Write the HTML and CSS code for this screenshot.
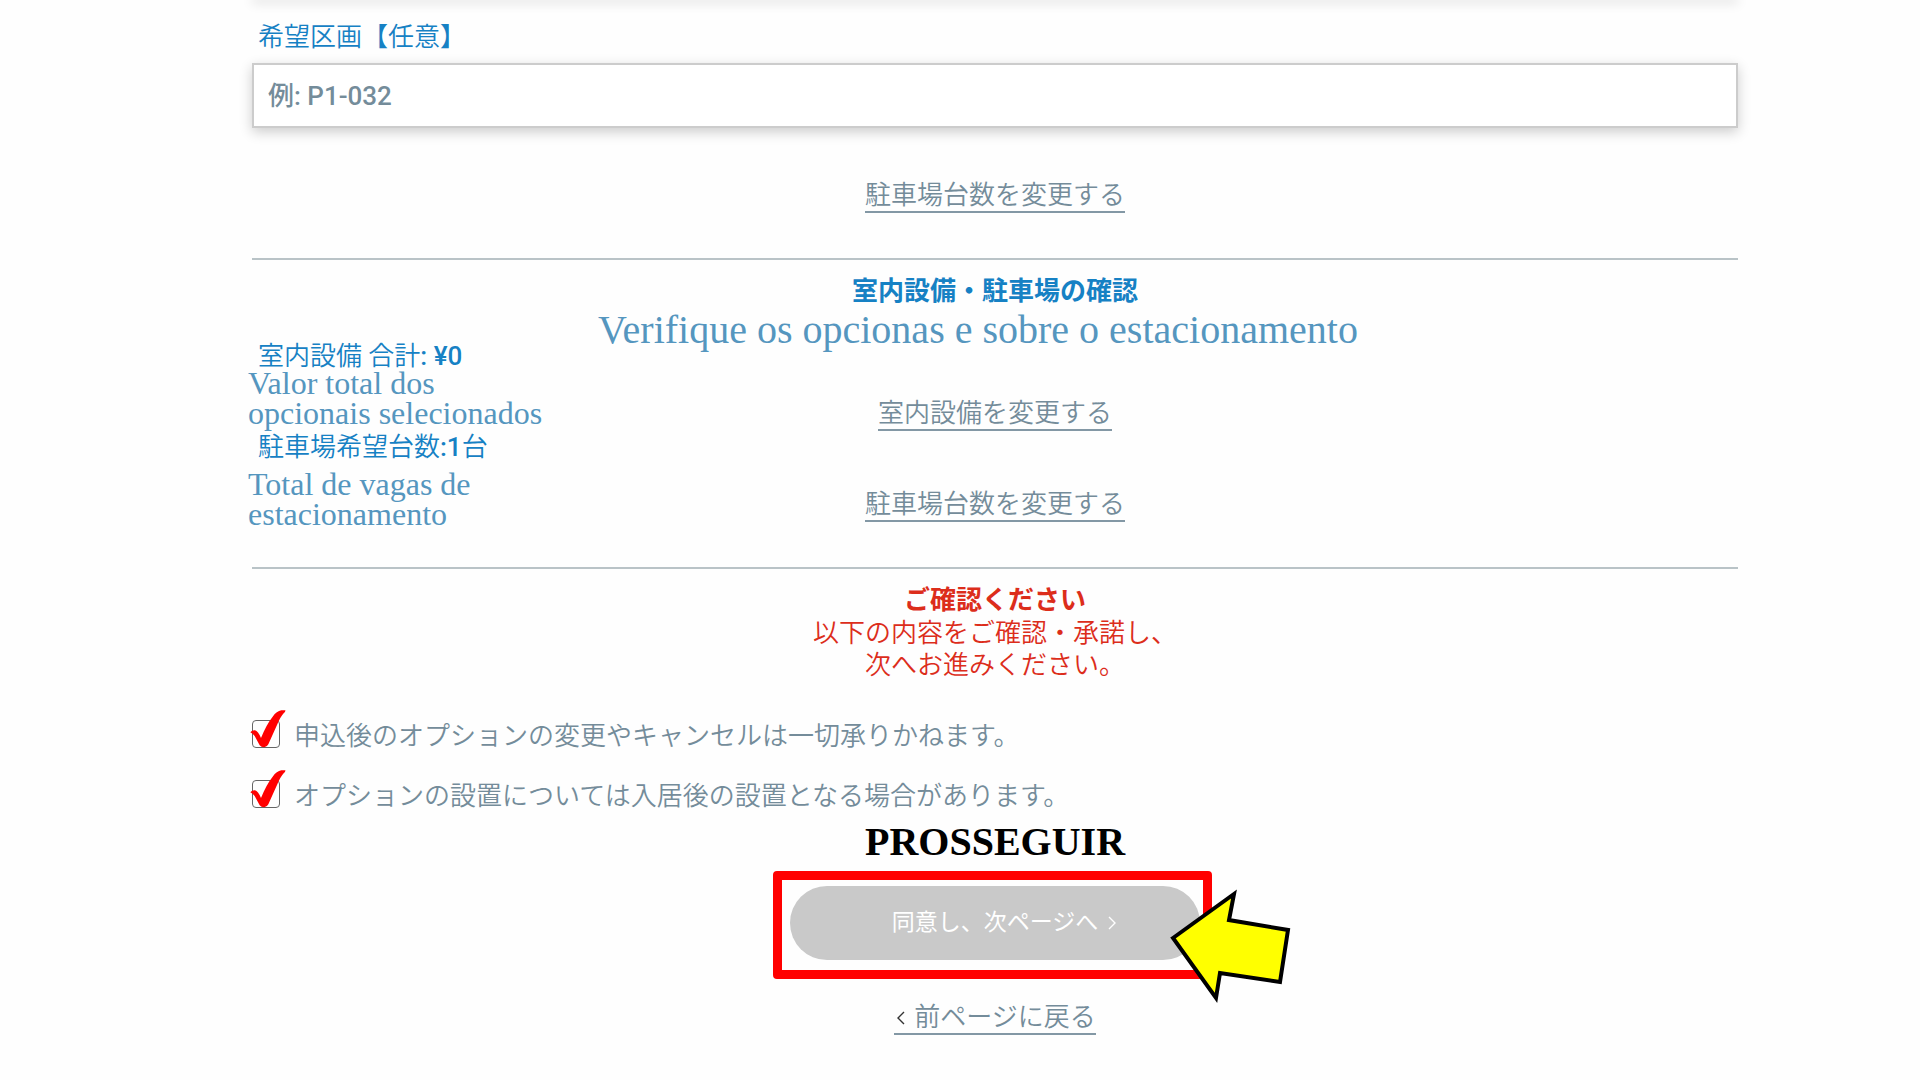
FILE: index.html
```html
<!DOCTYPE html>
<html lang="ja">
<head>
<meta charset="utf-8">
<meta name="viewport" content="width=device-width, initial-scale=1">
<title>室内設備・駐車場の確認</title>
<link rel="stylesheet" href="styles.css">
</head>
<body>
<main class="page">
  <div class="field-end"></div>
  <form class="form">
    <label class="field-label" for="lot">希望区画【任意】</label>
    <input class="field-input" id="lot" type="text" placeholder="例: P1-032">
    <a class="link parking-link" href="#">駐車場台数を変更する</a>

    <section class="section">
      <h2 class="title">室内設備・駐車場の確認</h2>
      <p class="subtitle" lang="pt">Verifique os opcionas e sobre o estacionamento</p>
      <div class="summary">
        <div class="row">
          <div>
            <p class="total">室内設備 合計<span class="value">: ¥0</span></p>
            <p class="note" lang="pt">Valor total dos<br>opcionais selecionados</p>
          </div>
          <a class="link row-link" href="#">室内設備を変更する</a>
        </div>
        <div class="row row-parking">
          <div>
            <p class="total">駐車場希望台数<span class="value">:1</span>台</p>
            <p class="note" lang="pt">Total de vagas de<br>estacionamento</p>
          </div>
          <a class="link row-link" href="#">駐車場台数を変更する</a>
        </div>
      </div>
    </section>

    <section class="section">
      <h2 class="title warning-title">ご確認ください</h2>
      <p class="warning">以下の内容をご確認・承諾し、<br>次へお進みください。</p>
      <div class="checks">
        <label class="check">
          <input class="box" type="checkbox">
          <svg class="tick" viewBox="0 0 108 114" aria-hidden="true"><path d="M1 67 Q6 60 15 61 Q24 63 33 84 Q50 42 68 20 Q80 3 94 1 L106 1 Q107 4 101 10 Q91 21 82 43 L55 103 Q51 111 43 112 Q33 112 29 106 L14 78 Q8 70 1 67Z"/></svg>
          <span class="check-text">申込後のオプションの変更やキャンセルは一切承りかねます。</span>
        </label>
        <label class="check">
          <input class="box" type="checkbox">
          <svg class="tick" viewBox="0 0 108 114" aria-hidden="true"><path d="M1 67 Q6 60 15 61 Q24 63 33 84 Q50 42 68 20 Q80 3 94 1 L106 1 Q107 4 101 10 Q91 21 82 43 L55 103 Q51 111 43 112 Q33 112 29 106 L14 78 Q8 70 1 67Z"/></svg>
          <span class="check-text">オプションの設置については入居後の設置となる場合があります。</span>
        </label>
      </div>
      <p class="proceed" lang="pt">PROSSEGUIR</p>
      <div class="submit">
        <button class="next" type="button">
          <span class="next-text">同意し、次ページへ</span>
          <svg class="next-icon" viewBox="0 0 8 14" aria-hidden="true"><path d="M1 1 L7 7 L1 13"/></svg>
        </button>
        <div class="frame"></div>
        <svg class="arrow" viewBox="0 0 130 120" aria-hidden="true"><path d="M8 53 L69 9 L64 35 L123 45 L115 97 L55 88 L51 113Z"/></svg>
      </div>
      <a class="link back" href="#"><svg class="back-icon" viewBox="0 0 8 14" aria-hidden="true"><path d="M7 1 L1 7 L7 13"/></svg>前ページに戻る</a>
    </section>
  </form>
</main>
</body>
</html>
```
FILE: styles.css
```css
* { box-sizing: border-box; }

body {
  margin: 0;
  background: #fefefe;
  color: #748c9a;
  font: 350 26px/32px Roboto, "Noto Sans CJK JP", sans-serif;
}

h2, p { margin: 0; font-size: 26px; }

.page {
  display: flow-root;
  padding: 0 182px 44px 252px;
}

/* lower edge of the preceding field */
.field-end {
  height: 4px;
  margin-top: -6px;
  box-shadow: 0 4px 12px rgba(0, 0, 0, .2);
}

.form {
  display: flex;
  flex-direction: column;
  padding-top: 23px;
}

.field-label {
  padding-left: 6px;
  color: #1681c4;
}

.field-input {
  width: 100%;
  height: 65px;
  margin-top: 10px;
  padding: 0 14px;
  border: 2px solid #ccc;
  background: #fff;
  box-shadow: 0 4px 12px rgba(0, 0, 0, .2);
  color: inherit;
  font: inherit;
  font-weight: 500;
}
.field-input::placeholder { color: #748c9a; opacity: 1; }

.link {
  align-self: center;
  padding-top: 2px;
  border-bottom: 2px solid #8398a5;
  color: #748c9a;
  line-height: 31px;
  text-decoration: none;
}
.parking-link { margin: 50px 0 45px; }

.section {
  display: flex;
  flex-direction: column;
  border-top: 2px solid #b9c3c7;
  padding-top: 15px;
}

.title {
  color: #1681c4;
  font-weight: 700;
  line-height: 33px;
  text-align: center;
}

.subtitle {
  margin-top: 6px;
  padding-right: 34px;
  color: #5596bf;
  font: 40px/32px "Liberation Serif", serif;
  text-align: center;
}

.summary { padding-bottom: 38px; }
.row {
  display: grid;
  grid-template-columns: 1fr auto 1fr;
  align-items: start;
}
.row + .row { margin-top: 6px; }
.row-link { align-self: start; margin-top: 50px; }

.total {
  padding-left: 6px;
  color: #1681c4;
  line-height: 20px;
}
.value { font-weight: 500; }
.note {
  margin: 2px 0 0 -4px;
  color: #5596bf;
  font: 32px/30px "Liberation Serif", serif;
}
.row-parking .note { margin-top: 12px; }

.warning-title,
.warning { color: #dc2d1b; }
.warning { text-align: center; }

.checks {
  display: grid;
  gap: 32px;
  justify-items: start;
  margin-top: 39px;
}
.check {
  position: relative;
  display: flex;
  align-items: center;
  gap: 14px;
  line-height: 24px;
}
.check-text { padding-top: 4px; }
.box {
  appearance: none;
  width: 28px;
  height: 28px;
  margin: 0;
  border: 1px solid #666;
  border-radius: 4px;
}
.tick {
  position: absolute;
  left: -2px;
  bottom: 0;
  width: 36px;
  height: 38px;
  fill: #f00;
}

.proceed {
  margin-top: 14px;
  color: #000;
  font: 700 40px/40px "Liberation Serif", serif;
  text-align: center;
}

.submit {
  position: relative;
  align-self: center;
  width: 410px;
  margin: 24px 0 40px;
}
.next {
  display: grid;
  grid-template-columns: 1fr auto 1fr;
  gap: 10px;
  align-items: center;
  width: 100%;
  height: 74px;
  padding: 0;
  border: 0;
  border-radius: 37px;
  background: #c9c9c9;
  color: #fff;
  font: inherit;
  font-size: 23px;
  font-weight: 400;
}
.next-text { grid-column: 2; }
.next-icon, .back-icon {
  width: 8px;
  height: 14px;
  fill: none;
  stroke: #fff;
  stroke-width: 1.4;
}
.frame {
  position: absolute;
  inset: -15px -12px -19px -17px;
  border: 9px solid #f00;
  border-radius: 4px;
  pointer-events: none;
}
.arrow {
  position: absolute;
  top: -1px;
  right: -95px;
  width: 130px;
  height: 120px;
  fill: #ff0;
  stroke: #000;
  stroke-width: 4;
  pointer-events: none;
}

.back {
  display: flex;
  align-items: center;
  gap: 9px;
  padding-left: 3px;
}
.back-icon { stroke: #333; }
```
